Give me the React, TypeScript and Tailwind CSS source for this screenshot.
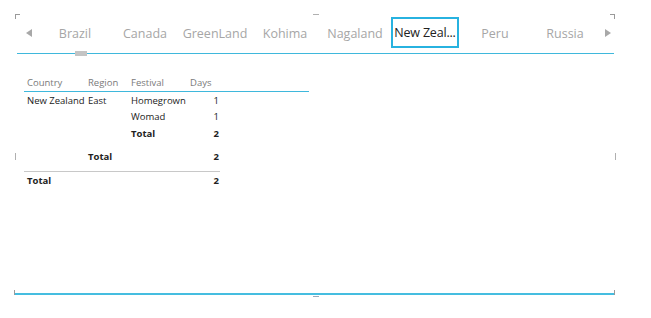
import React from "react";

const tabs = ["Brazil", "Canada", "GreenLand", "Kohima", "Nagaland", "New Zeal...", "Peru", "Russia"];

function Corner({ className }: { className: string }) {
  return <div className={`absolute w-[5px] h-[5px] border-[#9a9a9a] ${className}`} />;
}

const cols = "grid grid-cols-[61px_43px_59px_29px] pl-[3px] items-center whitespace-nowrap";

export default function App() {
  const font = { fontFamily: '"Open Sans", "Noto Sans", sans-serif' };
  return (
    <div className="relative w-[651px] h-[318px] bg-white overflow-hidden" style={font}>
      <Corner className="left-[15px] top-[14px] border-l border-t" />
      <Corner className="left-[610px] top-[14px] border-r border-t" />
      <div className="absolute left-[313px] top-[14px] w-[6px] h-px bg-[#b0b0b0]" />
      <div className="absolute left-[15px] top-[153px] w-px h-[7px] bg-[#b0b0b0]" />
      <div className="absolute left-[615px] top-[153px] w-px h-[7px] bg-[#b0b0b0]" />
      <Corner className="left-[14px] top-[290px] border-l border-b" />
      <Corner className="left-[610px] top-[290px] border-r border-b" />
      <div className="absolute left-[313px] top-[296px] w-[6px] h-px bg-[#9ab]" />

      <div className="flex flex-col pt-[16px] pl-[17px] w-[615px]">
        <div className="flex items-center h-[32px]">
          <div className="w-[23px] flex justify-center pl-[1px] pt-[2px]">
            <svg width="6" height="8" viewBox="0 0 6 8"><polygon points="6,0 6,8 0,4" fill="#a8a8a8" /></svg>
          </div>
          {tabs.map((t, i) =>
            i === 5 ? (
              <div key={t} className="w-[70px] h-[32px] flex items-center justify-center">
                <div className="w-[68px] h-[31px] border-2 border-[#27b2e0] flex items-center justify-center text-[12.5px] text-[#222] whitespace-nowrap tracking-[-0.2px] pt-[2px]">
                  {t}
                </div>
              </div>
            ) : (
              <div key={t} className="w-[70px] flex items-center justify-center text-[12.5px] text-[#a6a6a6] whitespace-nowrap pt-[4px]">
                {t}
              </div>
            )
          )}
          <div className="flex-1 flex justify-center pt-[2px]">
            <svg width="6" height="8" viewBox="0 0 6 8"><polygon points="0,0 0,8 6,4" fill="#a8a8a8" /></svg>
          </div>
        </div>
        <div className="relative mt-[5px] h-px w-[597px] bg-[#3fb8dc]">
          <div className="absolute left-[58px] top-[-2px] w-[12px] h-[5px] bg-[#c4c4c4]" />
        </div>

        <div className="ml-[7px] mt-[22px] w-[285px] text-[9.5px] text-[#222]">
          <div className={`${cols} h-[14px] text-[#7a7a7a] border-b border-[#3fb8dc] pb-[1px] box-content`}>
            <div>Country</div>
            <div>Region</div>
            <div>Festival</div>
            <div>Days</div>
          </div>
          <div className={`${cols} mt-[1px] h-[16px]`}>
            <div>New Zealand</div>
            <div>East</div>
            <div>Homegrown</div>
            <div className="text-right">1</div>
          </div>
          <div className={`${cols} h-[17px]`}>
            <div />
            <div />
            <div>Womad</div>
            <div className="text-right">1</div>
          </div>
          <div className={`${cols} h-[17px] font-bold`}>
            <div />
            <div />
            <div>Total</div>
            <div className="text-right">2</div>
          </div>
          <div className={`${cols} h-[17px] mt-[6px] font-bold`}>
            <div />
            <div>Total</div>
            <div />
            <div className="text-right">2</div>
          </div>
          <div className="w-[196px] h-px bg-[#c8c8c8] mt-[5px]" />
          <div className={`${cols} h-[16px] mt-[1px] font-bold`}>
            <div>Total</div>
            <div />
            <div />
            <div className="text-right">2</div>
          </div>
        </div>
      </div>

      <div className="absolute left-[15px] top-[293px] w-[599px] h-[2px] bg-[#45bde0]" />
    </div>
  );
}
